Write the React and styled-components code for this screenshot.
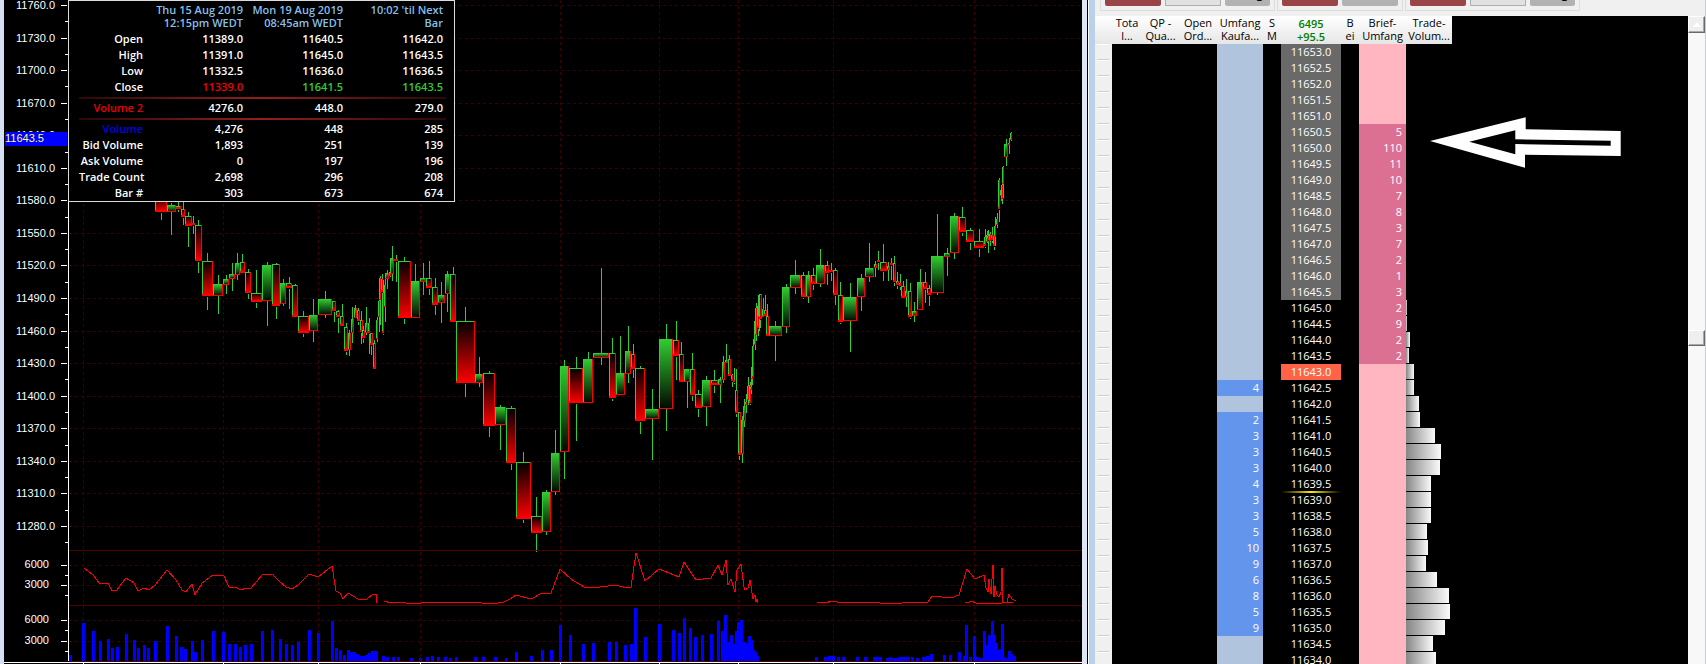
import React from 'react'
import styled, { createGlobalStyle, css } from 'styled-components'

const GlobalStyle = createGlobalStyle`
    * {
        box-sizing: border-box;
    }
    body {
        margin: 0;
        background: #000;
        font-family: "Open Sans", "Noto Sans", sans-serif;
        font-size: 11px;
    }
`

const Desktop = styled.main`
    display: flex;
    height: 100vh;
    overflow: hidden;
`

/* ---------- chart window ---------- */

const ChartWindow = styled.section`
    position: relative;
    flex: 1;
    min-width: 0;
    background: #000;
    border-left: 4px solid #d6e0f2;
    border-right: 5px solid #dce6f4;
`
const ChartSvg = styled.svg`
    display: block;
    width: 100%;
    height: 664px;
    font-family: "Liberation Sans", Arial, sans-serif;
    font-size: 11px;
`
const InfoBox = styled.div`
    position: absolute;
    top: 0;
    left: 64px;
    width: 387px;
    padding: 0 8px 0 10px;
    background: #000;
    border: 1px solid #dcdcdc;
`
const InfoTable = styled.table`
    width: 100%;
    table-layout: fixed;
    border-collapse: collapse;
    color: #fff;
    font-weight: 600;
    line-height: 16px;
    white-space: nowrap;
`
const InfoHead = styled.th`
    width: ${({ $label }) => ($label ? '67px' : '100px')};
    height: 30px;
    padding: 2px 3px 2px 0;
    color: #87bfe8;
    font-weight: 600;
    line-height: 13px;
    text-align: right;
`
const InfoLabel = styled.th`
    height: 16px;
    padding: 0 3px 0 0;
    color: ${({ $color }) => $color || '#fff'};
    font-weight: 600;
    text-align: right;
`
const InfoCell = styled.td`
    height: 16px;
    padding: 0 3px 0 0;
    color: ${({ $color }) => $color || '#fff'};
    text-align: right;
`
const RuleCell = styled.td`
    height: 5px;
    padding: 2px 0 1px;
    line-height: 0;
`
const Rule = styled.div`
    height: 2px;
    background: linear-gradient(90deg, #2c0808, #961e1e 50%, #2c0808);
`

/* ---------- price ladder window ---------- */

const LadderWindow = styled.section`
    flex: 0 0 619px;
    display: flex;
    border-left: 1px solid #000;
    background: #fff;
`
const LadderFrame = styled.div`
    flex: 1;
    display: flex;
    flex-direction: column;
    min-width: 0;
    margin-left: 1px;
    border-left: 6px solid #b9d1ea;
    border-right: 1px solid #b9d1ea;
    background: #f0f0f0;
`
const Toolbar = styled.div`
    display: flex;
    gap: 2px;
    flex: 0 0 16px;
    padding-left: 5px;
    overflow: hidden;
`
const ToolGroup = styled.div`
    display: flex;
    align-items: flex-end;
    gap: 4px;
    height: 11px;
    padding: 0 4px 4px;
    border: 1px solid #dcdcdc;
    border-top: 0;
`
const tones = {
    red: css`
        width: 56px;
        background: #994446;
    `,
    plain: css`
        width: 56px;
        background: #e1e1e1;
        border: 1px solid #adadad;
        border-radius: 0;
    `,
    grey: css`
        width: 56px;
        background: #b2b2b2;
    `,
    small: css`
        width: 45px;
        background: #b2b2b2;
    `,
}
const ToolButton = styled.button`
    flex: none;
    height: 24px;
    padding: 0 7px;
    border: 0;
    border-radius: 2px;
    color: #000;
    font: 600 12px/14px "Open Sans", sans-serif;
    text-align: right;
    ${({ $tone }) => tones[$tone]}
`
const LadderBody = styled.div`
    flex: 1;
    display: flex;
    min-height: 0;
`
const LadderScreen = styled.div`
    position: relative;
    flex: 1;
    min-width: 0;
    background: #000;
    overflow: hidden;
`
const LadderTable = styled.table`
    width: 100%;
    table-layout: fixed;
    border-collapse: collapse;
    color: #fff;
    white-space: nowrap;
`
const Head = styled.th`
    width: ${({ $width }) => $width}px;
    height: 28px;
    padding: ${({ $quote }) => ($quote ? '1px 0' : '0 0 2px')};
    background: linear-gradient(#fff, #e6e6e6);
    color: ${({ $quote }) => ($quote ? '#008000' : '#000')};
    font-weight: ${({ $quote }) => ($quote ? 600 : 400)};
    line-height: 13px;
    text-align: center;
`
const HeadFill = styled.th`
    padding: 0;
`
const Cell = styled.td`
    height: 16px;
    padding: 0;
    line-height: 16px;
`
const GutterCell = styled(Cell)`
    padding: 0 3px 0 2px;
    background: #f0f0f0;
`
const Notch = styled.div`
    height: 16px;
    border-top: 1px solid #fff;
    border-bottom: 1px solid #cfcfcf;
`
const BidCell = styled(Cell)`
    padding-right: 4px;
    background: ${({ $active }) => ($active ? '#6495ed' : '#b0c4de')};
    text-align: right;
`
const AskCell = styled(Cell)`
    padding-right: 4px;
    background: ${({ $active }) => ($active ? '#db7093' : '#ffb6c1')};
    text-align: right;
`
const PriceCell = styled(Cell)`
    background-color: ${({ $fill }) => $fill || '#000'};
    text-align: center;
    ${({ $mark }) => $mark && css`
        background-image: linear-gradient(90deg, #000, #ffee00 50%, #000);
        background-repeat: no-repeat;
        background-size: 100% 1px;
        background-position: 0 ${$mark};
    `}
`
const VolumeBar = styled.div`
    height: 15px;
    margin-bottom: 1px;
    background: linear-gradient(90deg, #868686, #fafafa);
`
const ArrowNote = styled.svg`
    position: absolute;
    top: 100px;
    left: 335px;
    width: 192px;
    height: 53px;
`
const Scrollbar = styled.div`
    display: flex;
    flex-direction: column;
    width: 17px;
    background: #f8f8f8;
`
const ScrollButton = styled.button`
    flex: none;
    display: flex;
    align-items: center;
    justify-content: center;
    height: ${({ $thumb }) => ($thumb ? 16 : 17)}px;
    margin-top: ${({ $thumb }) => ($thumb ? 297 : 0)}px;
    padding: 0;
    background: #efefef;
    border: 1px solid;
    border-color: #fff #696969 #696969 #fff;
    box-shadow: inset -1px -1px 0 #a8a8a8;
`

const GRID_X = [83, 223, 318, 420, 560, 659, 738, 833, 974]
const PRICES = Array.from({ length: 17 }, (_, i) => 11760 - i * 30)
const priceY = (price) => Math.round(5 + ((11760 - price) / 30) * 32.56)

// x, width, body top, body bottom, high, low, rising
const CANDLES = [
    [155, 12, 195, 212, 190, 219, 0], [167, 9, 205, 212, 203, 235, 1], [176, 5, 206, 209, 202, 211, 0],
    [181, 4, 209, 217, 202, 224, 0], [185, 7, 216, 226, 212, 246, 0], [192, 3, 224, 225, 216, 233, 0],
    [195, 7, 225, 261, 220, 272, 0], [202, 11, 261, 296, 253, 309, 0], [213, 10, 284, 296, 275, 314, 1],
    [223, 6, 279, 285, 275, 294, 1], [229, 6, 274, 279, 263, 291, 1], [235, 5, 263, 275, 253, 280, 1],
    [240, 5, 262, 273, 254, 273, 0], [245, 6, 272, 293, 269, 298, 0], [251, 11, 293, 302, 270, 307, 0],
    [262, 10, 265, 301, 262, 326, 1], [272, 8, 264, 306, 263, 318, 0], [280, 6, 283, 304, 279, 306, 1],
    [286, 6, 283, 288, 277, 308, 0], [292, 6, 285, 317, 284, 317, 0], [298, 11, 316, 333, 311, 336, 0],
    [309, 9, 315, 331, 299, 342, 1], [318, 14, 299, 315, 291, 318, 1], [332, 4, 301, 311, 301, 321, 0],
    [336, 4, 311, 317, 310, 332, 0], [340, 4, 316, 326, 304, 326, 0], [344, 4, 327, 351, 323, 354, 0],
    [348, 3, 333, 350, 330, 356, 1], [351, 3, 319, 333, 307, 343, 1], [354, 3, 308, 318, 305, 318, 1],
    [357, 3, 310, 321, 308, 324, 0], [360, 3, 320, 332, 311, 343, 0], [362, 3, 330, 338, 326, 342, 0],
    [365, 3, 323, 333, 307, 335, 1], [368, 2, 323, 333, 318, 353, 0], [370, 3, 333, 345, 333, 354, 0],
    [373, 3, 343, 369, 340, 369, 0], [376, 2, 320, 339, 317, 342, 1], [378, 2, 301, 317, 300, 332, 1],
    [379, 2, 278, 300, 276, 325, 1], [381, 2, 279, 292, 274, 299, 0], [382, 2, 293, 333, 280, 334, 0],
    [384, 2, 285, 307, 279, 322, 1], [385, 4, 273, 279, 270, 289, 1], [389, 2, 272, 276, 269, 277, 1],
    [390, 4, 258, 274, 246, 281, 1], [394, 4, 259, 261, 255, 281, 0], [398, 13, 261, 318, 257, 323, 0],
    [411, 9, 281, 318, 264, 318, 1], [420, 6, 278, 282, 263, 295, 1], [426, 6, 278, 288, 261, 294, 0],
    [432, 6, 287, 305, 278, 314, 0], [438, 7, 295, 303, 282, 323, 1], [445, 5, 274, 294, 271, 312, 1],
    [450, 6, 274, 322, 267, 322, 0], [456, 19, 321, 383, 307, 396, 0], [475, 8, 374, 383, 357, 387, 1],
    [483, 12, 373, 426, 371, 436, 0], [495, 11, 407, 425, 405, 450, 1], [506, 10, 408, 463, 406, 469, 0],
    [516, 15, 462, 519, 452, 522, 0], [531, 11, 516, 533, 497, 551, 0], [542, 9, 492, 532, 490, 535, 1],
    [551, 9, 453, 492, 430, 495, 1], [560, 9, 366, 452, 360, 479, 1], [569, 14, 368, 403, 357, 440, 0],
    [583, 10, 359, 403, 352, 403, 1], [593, 16, 353, 358, 268, 365, 1], [609, 7, 353, 398, 338, 400, 0],
    [616, 9, 373, 395, 336, 395, 1], [625, 6, 351, 374, 326, 383, 1], [631, 4, 354, 369, 344, 377, 0],
    [635, 10, 368, 421, 366, 433, 0], [645, 14, 409, 419, 389, 460, 1], [659, 14, 339, 409, 324, 431, 1],
    [673, 6, 340, 356, 321, 379, 0], [679, 5, 354, 382, 342, 382, 0], [684, 6, 369, 382, 369, 408, 1],
    [690, 5, 369, 395, 353, 400, 0], [695, 7, 394, 408, 390, 416, 0], [702, 9, 380, 407, 376, 426, 1],
    [711, 7, 380, 385, 370, 392, 0], [718, 4, 379, 385, 377, 403, 1], [722, 3, 362, 380, 356, 383, 1],
    [725, 3, 360, 363, 344, 363, 1], [728, 3, 359, 376, 355, 376, 0], [731, 2, 375, 381, 374, 386, 0],
    [733, 2, 380, 382, 368, 383, 0], [735, 3, 390, 413, 369, 416, 0], [738, 3, 412, 455, 412, 459, 0],
    [741, 3, 420, 454, 416, 463, 1], [743, 3, 406, 421, 399, 427, 1], [745, 2, 402, 405, 394, 413, 1],
    [747, 2, 386, 400, 377, 405, 1], [749, 2, 385, 403, 382, 404, 0], [750, 2, 387, 390, 377, 394, 1],
    [751, 2, 367, 379, 367, 385, 1], [752, 2, 346, 377, 339, 348, 1], [754, 2, 321, 345, 321, 350, 1],
    [755, 2, 308, 335, 303, 341, 1], [757, 2, 306, 328, 304, 335, 0], [758, 2, 295, 317, 295, 331, 1],
    [759, 3, 294, 319, 294, 327, 0], [762, 2, 309, 317, 298, 317, 1], [764, 3, 310, 316, 295, 316, 0],
    [766, 3, 316, 336, 304, 336, 0], [769, 13, 326, 336, 321, 361, 1], [782, 8, 287, 327, 284, 333, 1],
    [790, 11, 275, 288, 260, 294, 1], [801, 5, 275, 297, 272, 298, 0], [806, 5, 275, 297, 271, 303, 1],
    [811, 5, 275, 284, 268, 289, 0], [816, 9, 265, 284, 249, 287, 1], [825, 4, 265, 273, 261, 284, 0],
    [829, 4, 271, 272, 263, 280, 0], [833, 5, 270, 295, 268, 304, 0], [838, 5, 295, 322, 282, 323, 0],
    [843, 14, 297, 321, 283, 352, 1], [857, 8, 278, 297, 274, 311, 1], [865, 9, 268, 277, 243, 282, 1],
    [874, 3, 264, 268, 261, 277, 1], [877, 3, 260, 262, 251, 269, 0], [880, 7, 262, 271, 244, 280, 0],
    [887, 3, 266, 270, 262, 281, 1], [890, 3, 264, 265, 258, 279, 0], [893, 3, 263, 282, 256, 285, 0],
    [896, 3, 281, 285, 272, 288, 0], [899, 2, 283, 286, 274, 289, 0], [901, 4, 286, 298, 281, 298, 0],
    [905, 3, 291, 297, 279, 307, 1], [908, 4, 291, 317, 283, 318, 0], [912, 5, 311, 316, 302, 322, 1],
    [917, 6, 282, 310, 269, 310, 1], [923, 4, 282, 289, 272, 302, 0], [927, 4, 288, 295, 285, 305, 0],
    [931, 13, 256, 293, 214, 295, 1], [944, 6, 253, 257, 248, 276, 1], [950, 9, 216, 253, 213, 259, 1],
    [959, 7, 217, 232, 207, 235, 0], [966, 8, 230, 242, 228, 249, 0], [974, 10, 241, 248, 229, 256, 0],
    [984, 2, 237, 246, 229, 247, 0], [986, 2, 235, 242, 231, 243, 1], [987, 2, 236, 240, 230, 252, 0],
    [989, 2, 234, 241, 232, 246, 1], [991, 2, 235, 240, 227, 242, 0], [993, 2, 236, 246, 234, 249, 0],
    [994, 2, 226, 237, 217, 246, 1], [996, 2, 219, 225, 213, 228, 1], [998, 2, 180, 209, 178, 221, 0],
    [1000, 2, 190, 196, 190, 201, 1], [1001, 2, 185, 199, 183, 204, 1], [1002, 2, 167, 184, 166, 198, 1],
    [1004, 4, 144, 157, 139, 166, 1], [1008, 2, 143, 145, 138, 154, 1], [1010, 2, 133, 140, 132, 141, 1],
]

const VOLUME_LINES = [
    '84,568 93,575 100,584 108,583 112,591 117,590 126,578 134,583 138,591 144,588 149,590 155,585 167,570 176,580 182,590 186,592 192,584 195,595 202,583 213,575 224,576 229,587 235,587 241,590 246,588 251,588 262,575 272,574 280,582 286,587 292,589 298,585 309,574 318,577 332,566 336,591 340,593 343,599 348,593 353,596 358,599 367,599 373,594 376,594 376,603',
    '384,602 386,601 389,603 392,602 405,602 406,603 421,603 424,602 442,602 443,603 453,602 480,602 482,603 498,603 504,602 510,599 516,595 531,599 542,593 551,593 560,569 571,579 584,587 600,587 616,585 626,588 631,587 636,553 645,581 659,569 679,577 684,562 696,580 711,578 718,565 722,575 726,560 728,585 731,579 735,592 737,570 741,564 744,587 745,590 748,588 750,580 753,599 755,595 756,602 757,599 758,603',
    '817,602 824,603 833,601 837,602 875,602 880,603 902,603 906,602 918,603 928,602 932,596 951,598 959,595 967,569 975,579 984,575 986,588 988,592 989,579 991,594 993,565 994,597 995,586 997,595 999,597 1001,592 1002,568 1002,602 1007,602 1009,594 1012,599 1016,601',
    '965,602 967,603 971,601 976,603 1002,603 1004,602 1013,602',
]

// x, top
const VOLUME_BARS = [
    [70, 655], [83, 623], [93, 631], [100, 641], [108, 639], [112, 648], [117, 647], [126, 634], [134, 640],
    [138, 648], [144, 645], [148, 648], [155, 641], [167, 626], [176, 636], [181, 647], [185, 649], [192, 641],
    [195, 652], [202, 640], [213, 631], [223, 632], [229, 644], [235, 644], [240, 647], [245, 645], [251, 644],
    [262, 631], [272, 630], [280, 639], [286, 644], [292, 645], [298, 642], [309, 630], [318, 633], [332, 621],
    [336, 648], [340, 650], [344, 655], [348, 650], [351, 652], [354, 652], [357, 654], [360, 656], [363, 656],
    [366, 655], [369, 653], [372, 651], [375, 651], [376, 651], [383, 656], [387, 657], [393, 657], [398, 657],
    [411, 658], [420, 658], [427, 657], [432, 656], [438, 657], [445, 657], [450, 658], [456, 657], [475, 657],
    [483, 657], [495, 657], [506, 658], [516, 652], [531, 656], [542, 650], [551, 650], [560, 625], [570, 635],
    [583, 644], [593, 643], [609, 642], [616, 642], [625, 645], [631, 644], [635, 608], [645, 637], [659, 624],
    [673, 630], [679, 633], [684, 618], [690, 628], [695, 637], [702, 635], [711, 634], [718, 621], [722, 631],
    [725, 615], [728, 642], [731, 635], [734, 644], [736, 631], [738, 622], [741, 620], [744, 642], [746, 643],
    [749, 636], [751, 640], [753, 650], [755, 652], [757, 656], [816, 657], [825, 657], [829, 656], [833, 656],
    [838, 657], [843, 657], [857, 657], [865, 657], [874, 657], [877, 657], [880, 657], [887, 658], [890, 657],
    [893, 658], [896, 658], [899, 657], [902, 657], [905, 657], [908, 657], [912, 657], [917, 658], [923, 657],
    [927, 656], [931, 654], [944, 655], [950, 655], [959, 652], [964, 656], [966, 625], [970, 657], [974, 636],
    [977, 657], [981, 658], [984, 631], [986, 645], [988, 646], [989, 635], [992, 621], [994, 635], [996, 643],
    [998, 650], [1000, 649], [1002, 624], [1003, 657], [1006, 658], [1009, 651], [1011, 654], [1014, 656],
]

const SUB_TICKS = [
    { y: 565, label: '6000' }, { y: 575 }, { y: 585, label: '3000' }, { y: 595 },
    { y: 620, label: '6000' }, { y: 630 }, { y: 641, label: '3000' }, { y: 651 },
]

const Candle = ({ data }) => {
    const [x, w, top, bottom, high, low, up] = data
    const mid = x + Math.floor(w / 2)
    const base = up ? 1 : 2
    return (
        <g>
            <rect x={mid} y={high} width="1" height={Math.max(top - high, 0)} fill="#32cd32" />
            <rect x={mid} y={bottom + base - 1} width="1" height={Math.max(low - bottom, 0)} fill="#32cd32" />
            <rect x={x} y={top} width={w} height={bottom - top} fill={up ? 'url(#rise)' : 'url(#fall)'} />
            <rect x={x} y={top} width="1" height={bottom - top} fill="#32cd32" />
            <rect x={x} y={top} width={w} height="1" fill="#32cd32" />
            <rect x={x + w - 1} y={top} width="1" height={bottom - top} fill="#f00" />
            <rect x={x} y={bottom - base} width={w} height={base} fill="#f00" />
        </g>
    )
}

const Chart = () => (
    <ChartSvg role="img" aria-label="Price chart with volume studies">
        <defs>
            <linearGradient id="rise" x1="0" y1="0" x2="0" y2="1">
                <stop offset="0" stopColor="#32cd32" />
                <stop offset="1" stopColor="#000800" />
            </linearGradient>
            <linearGradient id="fall" x1="0" y1="0" x2="0" y2="1">
                <stop offset="0" stopColor="#000" />
                <stop offset="1" stopColor="#f00" />
            </linearGradient>
        </defs>
        <g transform="translate(-4 0)" shapeRendering="crispEdges">
            <g stroke="#3c0000" strokeDasharray="3 3">
                {PRICES.map((p) => (
                    <line key={p} x1="69" x2="110%" y1={priceY(p) + 0.5} y2={priceY(p) + 0.5} />
                ))}
                {SUB_TICKS.filter((t) => t.label).map((t) => (
                    <line key={t.y} x1="69" x2="110%" y1={t.y + 0.5} y2={t.y + 0.5} />
                ))}
                {GRID_X.map((x) => <line key={x} x1={x + 0.5} x2={x + 0.5} y1="0" y2="661" />)}
            </g>
            {CANDLES.map((c) => <Candle key={c[0]} data={c} />)}
            {VOLUME_LINES.map((points) => (
                <polyline key={points} points={points} fill="none" stroke="#f00" />
            ))}
            {VOLUME_BARS.map(([x, y]) => (
                <rect key={x} x={x - 1} y={y} width="3" height={661 - y} fill="#00f" />
            ))}
            <g fill="#500000">
                <rect x="69" y="550" width="110%" height="1" />
                <rect x="69" y="605" width="110%" height="1" />
                <rect x="69" y="661" width="110%" height="1" />
            </g>
            <g fill="#fff">
                <rect x="68" y="0" width="1" height="661" />
                <rect x="4" y="662" width="110%" height="1" />
                {GRID_X.map((x) => <rect key={x} x={x} y="662" width="1" height="2" />)}
                {PRICES.map((p) => (
                    <g key={p}>
                        <rect x="61" y={priceY(p)} width="6" height="1" />
                        <rect x="65" y={priceY(p - 15)} width="3" height="1" />
                        <text x="55" y={priceY(p) + 4} textAnchor="end">{p.toFixed(1)}</text>
                    </g>
                ))}
                {SUB_TICKS.map(({ y, label }) => (
                    <g key={y}>
                        <rect x={label ? 61 : 65} y={y} width={label ? 6 : 3} height="1" />
                        {label && <text x="49" y={y + 3} textAnchor="end">{label}</text>}
                    </g>
                ))}
            </g>
            <rect x="5" y="132" width="62" height="14" fill="#00f" />
            <text x="5" y="142" fill="#ffff80">11643.5</text>
        </g>
    </ChartSvg>
)

const INFO_TOP = [
    ['Open', '11389.0', '11640.5', '11642.0'],
    ['High', '11391.0', '11645.0', '11643.5'],
    ['Low', '11332.5', '11636.0', '11636.5'],
    ['Close', '11339.0', '11641.5', '11643.5'],
]
const INFO_BOTTOM = [
    ['Volume', '4,276', '448', '285'],
    ['Bid Volume', '1,893', '251', '139'],
    ['Ask Volume', '0', '197', '196'],
    ['Trade Count', '2,698', '296', '208'],
    ['Bar #', '303', '673', '674'],
]
const LABEL_COLORS = { 'Volume 2': '#e60000', Volume: '#0000e6' }
const CLOSE_COLORS = ['#f00000', '#32cd32', '#32cd32']

const InfoRow = ({ row: [label, ...values] }) => (
    <tr>
        <InfoLabel scope="row" $color={LABEL_COLORS[label]}>{label}</InfoLabel>
        {values.map((value, i) => (
            <InfoCell key={i} $color={label === 'Close' ? CLOSE_COLORS[i] : undefined}>{value}</InfoCell>
        ))}
    </tr>
)

const RuleRow = () => (
    <tr>
        <RuleCell colSpan={4}><Rule /></RuleCell>
    </tr>
)

const Info = () => (
    <InfoBox>
        <InfoTable>
            <thead>
                <tr>
                    <InfoHead $label />
                    <InfoHead scope="col">Thu 15 Aug 2019<br />12:15pm WEDT</InfoHead>
                    <InfoHead scope="col">Mon 19 Aug 2019<br />08:45am WEDT</InfoHead>
                    <InfoHead scope="col">10:02 'til Next<br />Bar</InfoHead>
                </tr>
            </thead>
            <tbody>
                {INFO_TOP.map((row) => <InfoRow key={row[0]} row={row} />)}
                <RuleRow />
                <InfoRow row={['Volume 2', '4276.0', '448.0', '279.0']} />
                <RuleRow />
                {INFO_BOTTOM.map((row) => <InfoRow key={row[0]} row={row} />)}
            </tbody>
        </InfoTable>
    </InfoBox>
)

const COLUMNS = [
    [30, 'Tota', 'l...'],
    [37, 'QP -', 'Qua...'],
    [38, 'Open', 'Ord...'],
    [46, 'Umfang', 'Kaufa...'],
    [18, 'S', 'M'],
    [60, '6495', '+95.5'],
    [18, 'B', 'ei'],
    [47, 'Brief-', 'Umfang'],
    [46, 'Trade-', 'Volum...'],
]
const ASKS = [5, 110, 11, 10, 7, 8, 3, 7, 2, 1, 3, 2, 9, 2, 2]
const BIDS = [4, null, 2, 3, 3, 3, 4, 3, 3, 5, 10, 9, 6, 8, 5, 9]
const TRADED = [1, 1, 4, 3, 8, 8, 13, 14, 29, 35, 34, 25, 25, 25, 21, 22, 20, 31, 43, 44, 39, 27, 30]

const LEVELS = Array.from({ length: 39 }, (_, i) => ({
    price: 11653 - i / 2,
    ask: ASKS[i - 5],
    bid: BIDS[i - 21],
    traded: TRADED[i - 16],
}))

const priceFill = (price) => {
    if (price === 11643) return '#ff6347'
    return price > 11645 ? '#696969' : undefined
}
const priceMark = (price) => {
    if (price === 11639.5) return '100%'
    return price === 11639 ? '0' : undefined
}

const Ladder = () => (
    <LadderTable>
        <thead>
            <tr>
                <Head $width={17} />
                {COLUMNS.map(([width, first, second], i) => (
                    <Head key={i} scope="col" $width={width} $quote={first === '6495'}>
                        {first}<br />{second}
                    </Head>
                ))}
                <HeadFill />
            </tr>
        </thead>
        <tbody>
            {LEVELS.map(({ price, ask, bid, traded }) => (
                <tr key={price}>
                    <GutterCell><Notch /></GutterCell>
                    <Cell />
                    <Cell />
                    <Cell />
                    <BidCell $active={bid}>{bid}</BidCell>
                    <Cell />
                    <PriceCell $fill={priceFill(price)} $mark={priceMark(price)}>{price.toFixed(1)}</PriceCell>
                    <Cell />
                    <AskCell $active={ask}>{ask}</AskCell>
                    <Cell>{traded && <VolumeBar style={{ width: traded }} />}</Cell>
                    <Cell />
                </tr>
            ))}
        </tbody>
    </LadderTable>
)

const App = () => (
    <>
        <GlobalStyle />
        <Desktop>
            <ChartWindow>
                <Chart />
                <Info />
            </ChartWindow>
            <LadderWindow>
                <LadderFrame>
                    <Toolbar>
                        <ToolGroup>
                            <ToolButton $tone="red" />
                            <ToolButton $tone="plain" />
                            <ToolButton $tone="small">g</ToolButton>
                        </ToolGroup>
                        <ToolGroup>
                            <ToolButton $tone="red" />
                            <ToolButton $tone="grey" />
                        </ToolGroup>
                        <ToolGroup>
                            <ToolButton $tone="red" />
                            <ToolButton $tone="plain" />
                            <ToolButton $tone="small">g</ToolButton>
                        </ToolGroup>
                    </Toolbar>
                    <LadderBody>
                        <LadderScreen>
                            <Ladder />
                            <ArrowNote viewBox="1430 116 192 53" aria-hidden="true">
                                <path
                                    fill="#fff"
                                    fillRule="evenodd"
                                    d="M1430 141 1525.7 117.3V129.3L1620.7 131V156L1525 154.7V167.7ZM1469.3 141.7 1515.3 154.3V144L1610.7 145.7V140.7L1515.3 139.3V130.3Z"
                                />
                            </ArrowNote>
                        </LadderScreen>
                        <Scrollbar>
                            <ScrollButton aria-label="Scroll up">
                                <svg width="8" height="5" viewBox="0 0 8 5"><path d="M4 0 8 5H0Z" fill="#fff" /></svg>
                            </ScrollButton>
                            <ScrollButton $thumb aria-label="Scroll position" />
                        </Scrollbar>
                    </LadderBody>
                </LadderFrame>
            </LadderWindow>
        </Desktop>
    </>
)

export default App
